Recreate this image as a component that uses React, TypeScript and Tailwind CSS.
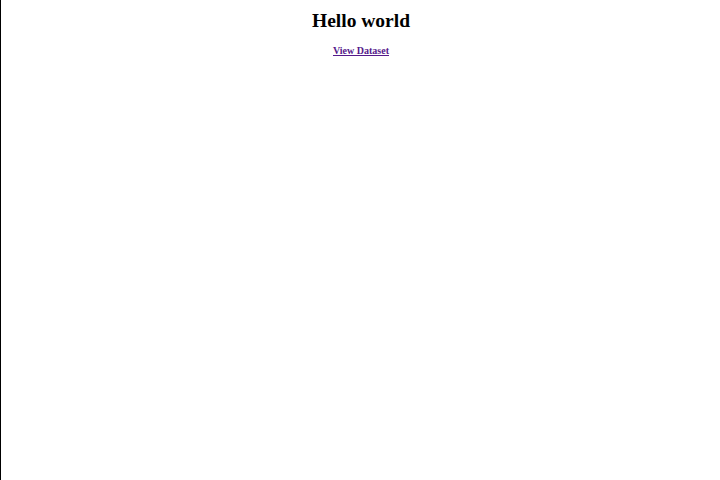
export default function App() {
  return (
    <div className="min-h-[480px] border-l border-black bg-white font-['Liberation_Serif',serif] text-black">
      <div className="flex flex-col items-center pt-[10px] pl-[1px]">
        <h1 className="text-[19.5px] leading-[22px] font-bold">Hello world</h1>
        <a
          href="#dataset"
          className="mt-[13px] text-[10px] leading-[12px] font-bold text-[#551a8b] underline"
        >
          View Dataset
        </a>
      </div>
    </div>
  );
}
